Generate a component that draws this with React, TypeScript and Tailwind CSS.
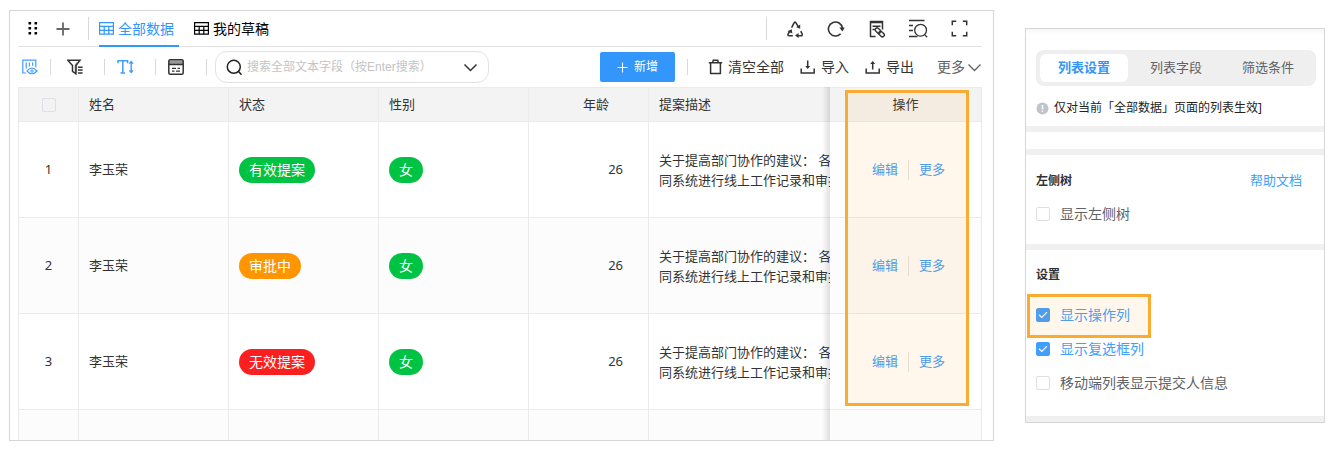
import { useState, type ReactNode } from "react";
import clsx from "clsx";

const rows = [
  { id: 1, name: "李玉荣", status: "有效提案", tone: "bg-[#00c343]", gender: "女", age: 26 },
  { id: 2, name: "李玉荣", status: "审批中", tone: "bg-[#ff9500]", gender: "女", age: 26 },
  { id: 3, name: "李玉荣", status: "无效提案", tone: "bg-[#fb1f1f]", gender: "女", age: 26 },
];

const description = ["关于提高部门协作的建议： 各", "同系统进行线上工作记录和审批"];

const cell = "border-r border-b border-[#ebebeb]";
const pinned =
  "relative before:absolute before:-left-2 before:-top-px before:bottom-0 before:w-2 before:bg-linear-to-r before:from-black/0 before:to-black/12";

function Icon({
  w,
  h,
  children,
  className,
}: {
  w: number;
  h: number;
  children: ReactNode;
  className?: string;
}) {
  return (
    <svg
      width={w}
      height={h}
      viewBox={`0 0 ${w} ${h}`}
      fill="none"
      stroke="currentColor"
      strokeWidth="1.4"
      className={clsx("shrink-0", className)}
      aria-hidden="true"
    >
      {children}
    </svg>
  );
}

function GridIcon() {
  return (
    <Icon w={15} h={13}>
      <path d="M.6.7h13.8v11.5H.6zM.6 4.4h13.8M.6 8.3h13.8M5.2 4.4v7.8M9.8 4.4v7.8" strokeWidth="1.2" />
    </Icon>
  );
}

function Divider({ tall }: { tall?: boolean }) {
  return <span className={clsx("w-px shrink-0 bg-[#d9d9d9]", tall ? "h-[23px]" : "h-4")} />;
}

function Check({
  id,
  label,
  checked,
  onChange,
}: {
  id: string;
  label: string;
  checked: boolean;
  onChange: () => void;
}) {
  return (
    <label
      htmlFor={id}
      className={clsx("flex h-[34px] items-center gap-2.5 text-sm", checked ? "text-[#409eff]" : "text-[#606266]")}
    >
      <span className="grid place-items-center">
        <input
          id={id}
          type="checkbox"
          checked={checked}
          onChange={onChange}
          className="col-start-1 row-start-1 size-3.5 appearance-none rounded-xs border border-[#dcdfe6] bg-white checked:border-[#409eff] checked:bg-[#409eff]"
        />
        {checked && (
          <Icon w={10} h={8} className="pointer-events-none col-start-1 row-start-1 text-white">
            <path d="M1 3.8l2.8 2.7L9 1.2" strokeWidth="1.2" />
          </Icon>
        )}
      </span>
      {label}
    </label>
  );
}

function TabBar() {
  return (
    <header className="mr-[11px] ml-2 flex h-9 items-center border-b border-[#e2e2e2] text-sm text-black">
      <button type="button" aria-label="拖动" className="ml-2.5">
        <Icon w={10} h={13}>
          <g fill="currentColor" stroke="none">
            {[0, 5, 10].map((y) => (
              <g key={y}>
                <rect x="0.5" y={y} width="2.6" height="2.6" rx=".6" />
                <rect x="6.5" y={y} width="2.6" height="2.6" rx=".6" />
              </g>
            ))}
          </g>
        </Icon>
      </button>
      <button type="button" aria-label="添加" className="ml-[18px] text-[#666]">
        <Icon w={14} h={14}>
          <path d="M7 .5v13M.5 7h13" strokeWidth="1.8" />
        </Icon>
      </button>
      <span className="ml-[18px] flex">
        <Divider tall />
      </span>
      <nav className="ml-2.5 flex h-9 gap-[15px]">
        <button type="button" className="flex h-9 items-center gap-1 border-b-2 border-[#3296fa] pt-0.5 pr-[5px] text-[#3296fa]">
          <GridIcon />
          全部数据
        </button>
        <button type="button" className="flex h-9 items-center gap-1">
          <GridIcon />
          我的草稿
        </button>
      </nav>
      <div className="mr-3.5 ml-auto flex items-center gap-[23px] text-[#333]">
        <span className="-mr-1 flex">
          <Divider tall />
        </span>
        <button type="button" aria-label="回收站">
          <Icon w={18} h={18}>
            <path d="M5.6 7.6L8.2 2.6q.8-1.2 1.6 0l2.6 4.2M3.9 11l-1.8 3.2q-.6 1.6 1 1.6h3.7M14.8 11.2l1.3 2.8q.5 1.8-1 1.8h-3.6" strokeWidth="1.6" />
            <path d="M14.2 4.4v4.4l-4-1.6zM1.5 11.2l4.2-2 .7 4.2zM12.6 13v5l-3.6-2.5z" fill="currentColor" stroke="none" />
          </Icon>
        </button>
        <button type="button" aria-label="刷新">
          <Icon w={18} h={18}>
            <path d="M13.6 13.7A7 7 0 1 1 15.4 8.2" strokeWidth="1.6" />
            <path d="M12.4 7.6h5.4l-2.4 3.8z" fill="currentColor" stroke="none" />
          </Icon>
        </button>
        <button type="button" aria-label="链接记录">
          <Icon w={18} h={18}>
            <path d="M7.5 16.5H2.5v-15h12v8M2.5 2.6h12M4.5 6.3h8M4.5 9.4h2.6" strokeWidth="1.5" />
            <rect x="8" y="7.5" width="3.8" height="6.2" rx="1.9" transform="rotate(-45 9.9 10.6)" />
            <rect x="11.6" y="11" width="3.8" height="6.2" rx="1.9" transform="rotate(-45 13.5 14.1)" />
          </Icon>
        </button>
        <button type="button" aria-label="列表搜索">
          <Icon w={19} h={19}>
            <path d="M0 1.5h15.5M0 6.5h4M0 11.5h4M0 17.5h8.5M15.6 15.6l2.5 2.6" strokeWidth="1.3" />
            <circle cx="11.6" cy="11.2" r="5.9" strokeWidth="1.3" />
          </Icon>
        </button>
        <button type="button" aria-label="全屏">
          <Icon w={17} h={17}>
            <path d="M5.2 1.3H1.3v3.9M11.8 1.3h3.9v3.9M5.2 15.7H1.3v-3.9M11.8 15.7h3.9v-3.9" strokeWidth="1.5" />
          </Icon>
        </button>
      </div>
    </header>
  );
}

function Toolbar() {
  return (
    <div className="mr-[11px] ml-2 flex h-10 items-center text-[#333]">
      <div className="flex items-center gap-3">
        <button type="button" aria-label="显示字段" className="ml-1 text-[#409eff]">
          <Icon w={16} h={16}>
            <path d="M4 14H.8V1.2h13v7M4.2 3.5v6M7.4 3.5v4M10.6 3.5v3.3" strokeWidth="1.2" />
            <path d="M5 12q4.8-6 10 0-5.200 5.500-10 0z" strokeWidth="1.2" />
            <circle cx="10" cy="12" r="1.2" strokeWidth="1" />
          </Icon>
        </button>
        <Divider />
        <button type="button" aria-label="筛选" className="ml-1">
          <Icon w={17} h={16}>
            <path d="M7.6 6l2.600-3.500v12l-2.600-2z" fill="#aaa" stroke="none" />
            <path d="M.8 1.3h12.200L8.900 6.500v8.300L5.500 12.300V6.500zM11 8.300h4.600M11 11.100h4.600M11 13.900h4.600" strokeWidth="1.500" />
          </Icon>
        </button>
        <span className="ml-2 flex">
          <Divider />
        </span>
        <button type="button" aria-label="行高">
          <Icon w={17} h={16} className="text-[#409eff]">
            <path d="M1 4.200V1.700h9.600v2.500M5.800 1.700v12M3.500 13.900h4.600" strokeWidth="1.500" />
            <path d="M14.200 3v10M12.300 4.600l1.900-2.100 1.900 2.100M12.300 11.400l1.900 2.100 1.900-2.100" strokeWidth="1.400" />
          </Icon>
        </button>
        <span className="ml-[9px] flex">
          <Divider />
        </span>
        <button type="button" aria-label="视图">
          <Icon w={16} h={16}>
            <path d="M1 1.500h14v4H1z" fill="#999" stroke="none" />
            <rect x=".8" y=".8" width="14.400" height="14.400" rx="1.500" strokeWidth="1.500" />
            <path d="M1 5.500h14M4 9.300h4M9.500 9.300h2.500M4 12.200h2.500M8 12.200h4" strokeWidth="1.300" />
          </Icon>
        </button>
        <span className="ml-2.5 flex">
          <Divider />
        </span>
      </div>
      <div className="ml-2 flex h-8 w-[274px] items-center rounded-xl border border-[#e2e2e2] px-2.5">
        <Icon w={17} h={17} className="text-[#222]">
          <circle cx="7.800" cy="7.800" r="6.500" strokeWidth="1.500" />
          <path d="M12.500 12.500l3 3.200" strokeWidth="1.500" />
        </Icon>
        <input
          type="text"
          aria-label="搜索"
          placeholder="搜索全部文本字段（按Enter搜索）"
          className="ml-1 min-w-0 flex-1 font-['Liberation_Sans','Noto_Sans_CJK_SC',sans-serif] text-xs outline-none placeholder:text-[#c4c4c4]"
        />
        <button type="button" aria-label="展开搜索">
          <Icon w={15} h={9}>
            <path d="M1.500 1.500l6 6 6-6" strokeWidth="1.500" />
          </Icon>
        </button>
      </div>
      <div className="ml-auto flex items-center text-sm">
        <button
          type="button"
          className="flex h-[30px] w-[75px] items-center justify-center gap-1.5 rounded-xs bg-[#3296fa] text-xs text-white"
        >
          <Icon w={11} h={11}>
            <path d="M5.500.5v10M.5 5.500h10" strokeWidth="1.100" />
          </Icon>
          新增
        </button>
        <span className="ml-3 flex">
          <Divider />
        </span>
        <button type="button" className="ml-5 flex items-center gap-[5px]">
          <Icon w={15} h={16}>
            <path d="M.8 3.800h13.400M4.700 3.500l.6-2.300h4.400l.6 2.300M2.600 4v10.500h9.800V4" strokeWidth="1.500" />
          </Icon>
          清空全部
        </button>
        <button type="button" className="ml-4 flex items-center gap-[5px]">
          <Icon w={16} h={15}>
            <path d="M1.200 8.500V13h13V8.500M7.700.5v7" strokeWidth="1.500" />
            <path d="M5.200 6h5l-2.500 3z" fill="currentColor" stroke="none" />
          </Icon>
          导入
        </button>
        <button type="button" className="ml-4 flex items-center gap-[5px]">
          <Icon w={16} h={15}>
            <path d="M1.200 8.500V13h13V8.500M7.700 2.500v7" strokeWidth="1.500" />
            <path d="M5.200 4h5L7.700 1z" fill="currentColor" stroke="none" />
          </Icon>
          导出
        </button>
        <button type="button" className="ml-[23px] flex items-center gap-0.5 text-[#606266]">
          更多
          <Icon w={15} h={9}>
            <path d="M1.500 1.500l6 6 6-6" strokeWidth="1.300" />
          </Icon>
        </button>
      </div>
    </div>
  );
}

function DataTable() {
  return (
    <div className="relative mr-[11px] ml-2 border-t border-l border-[#ebebeb]">
      <table className="w-full table-fixed border-separate border-spacing-0 text-[13px] text-[#333]">
        <colgroup>
          <col className="w-[60px]" />
          <col className="w-[150px]" />
          <col className="w-[150px]" />
          <col className="w-[150px]" />
          <col className="w-[120px]" />
          <col />
          <col className="w-[152px]" />
        </colgroup>
        <thead className="bg-[#f3f3f3] text-left [&_th]:h-[34px] [&_th]:font-normal">
          <tr>
            <th className={cell}>
              <input
                type="checkbox"
                aria-label="全选"
                className="mx-auto block size-3.5 appearance-none rounded-xs border border-[#dcdfe6]"
              />
            </th>
            <th className={clsx(cell, "px-2.5")}>姓名</th>
            <th className={clsx(cell, "px-2.5")}>状态</th>
            <th className={clsx(cell, "px-2.5")}>性别</th>
            <th className={clsx(cell, "pr-[39px] text-right")}>年龄</th>
            <th className="border-b border-[#ebebeb] px-2.5">提案描述</th>
            <th className={clsx(cell, pinned, "text-center")}>操作</th>
          </tr>
        </thead>
        <tbody>
          {rows.map((row) => (
            <tr key={row.id} className="h-24 even:bg-[#fcfcfc]">
              <td className={clsx(cell, "text-center")}>{row.id}</td>
              <td className={clsx(cell, "px-2.5")}>{row.name}</td>
              <td className={clsx(cell, "px-2.5")}>
                <span className={clsx("inline-block h-[26px] rounded-full px-2.5 text-sm/[26px] text-white", row.tone)}>
                  {row.status}
                </span>
              </td>
              <td className={clsx(cell, "px-2.5")}>
                <span className="inline-block h-[26px] rounded-full bg-[#00c343] px-2.5 text-sm/[26px] text-white">
                  {row.gender}
                </span>
              </td>
              <td className={clsx(cell, "pr-[25px] text-right")}>{row.age}</td>
              <td className="overflow-hidden border-b border-[#ebebeb] pl-2.5 leading-5 whitespace-nowrap">
                {description.map((line) => (
                  <p key={line}>{line}</p>
                ))}
              </td>
              <td className={clsx(cell, pinned, "pl-1.5")}>
                <div className="flex items-center justify-center gap-2.5 text-[#409eff]">
                  <button type="button">编辑</button>
                  <span className="h-5 w-px bg-[#e2e2e2]" />
                  <button type="button">更多</button>
                </div>
              </td>
            </tr>
          ))}
          <tr className="h-[30px] bg-[#fcfcfc]">
            <td className="border-r border-[#ebebeb]" />
            <td className="border-r border-[#ebebeb]" />
            <td className="border-r border-[#ebebeb]" />
            <td className="border-r border-[#ebebeb]" />
            <td className="border-r border-[#ebebeb]" />
            <td />
            <td className={clsx("border-r border-[#ebebeb]", pinned)} />
          </tr>
        </tbody>
      </table>
      {/* Highlight over the action column */}
      <div className="pointer-events-none absolute top-0.5 right-[13px] bottom-[34px] w-[124px] border-3 border-[#f9ac2f] bg-[#ff9800]/8" />
    </div>
  );
}

function SettingsPanel() {
  const [tab, setTab] = useState("列表设置");
  const [options, setOptions] = useState({ tree: false, actions: true, checks: true, mobile: false });
  const toggle = (key: keyof typeof options) => setOptions({ ...options, [key]: !options[key] });

  return (
    <aside className="mt-[18px] w-[300px] shrink-0 border border-[#d6d6d6] bg-white">
      <div className="bg-linear-to-b from-[#f7f7f7] to-white to-[6px] px-2.5 pt-[21px]">
        <div className="-mr-0.5 grid h-9 grid-cols-[88px_1fr_1fr] gap-1 rounded-lg bg-[#efefef] p-1 text-[13px]">
          {["列表设置", "列表字段", "筛选条件"].map((name) => (
            <button
              key={name}
              type="button"
              onClick={() => setTab(name)}
              className={clsx(
                "rounded-md whitespace-nowrap",
                tab === name ? "bg-white font-bold text-[#3296fa]" : "text-[#606266]",
              )}
            >
              {name}
            </button>
          ))}
        </div>
        <p className="flex h-10 items-center gap-[5px] pt-1 text-xs text-[#222]">
          <Icon w={13} h={13} className="text-[#c0c4cc]">
            <circle cx="6.500" cy="6.500" r="6" fill="currentColor" stroke="none" />
            <path d="M6.500 3v4.200M6.500 8.500v1.500" stroke="#fff" strokeWidth="1.500" />
          </Icon>
          仅对当前「全部数据」页面的列表生效]
        </p>
      </div>
      <div className="h-[23px] border-t-6 border-[#f0f0f0]" />
      <section className="border-t-6 border-[#f0f0f0] px-2.5 pt-3.5 pb-[13px]">
        <div className="mb-1 flex h-6 items-center justify-between pr-3">
          <h2 className="text-xs font-bold text-[#303133]">左侧树</h2>
          <a href="#help" className="text-[13px] text-[#409eff]">
            帮助文档
          </a>
        </div>
        <Check id="tree" label="显示左侧树" checked={options.tree} onChange={() => toggle("tree")} />
      </section>
      <section className="border-y-6 border-[#f0f0f0] px-2.5 pt-3 pb-4">
        <h2 className="flex h-[26px] items-center text-xs font-bold text-[#303133]">设置</h2>
        <div className="relative mt-2.5">
          <Check id="actions" label="显示操作列" checked={options.actions} onChange={() => toggle("actions")} />
          <div className="pointer-events-none absolute -top-1 -left-[9px] h-11 w-[124px] border-3 border-[#f9ac2f] bg-[#ff9800]/8" />
        </div>
        <Check id="checks" label="显示复选框列" checked={options.checks} onChange={() => toggle("checks")} />
        <Check
          id="mobile"
          label="移动端列表显示提交人信息"
          checked={options.mobile}
          onChange={() => toggle("mobile")}
        />
      </section>
    </aside>
  );
}

export default function App() {
  return (
    <div className="flex items-start gap-[31px] bg-white pt-2.5 pr-3 pb-2.5 pl-[9px] font-['Noto_Sans','Noto_Sans_CJK_SC',sans-serif]">
      <main className="min-w-0 flex-1 border border-[#d6d6d6]">
        <TabBar />
        <Toolbar />
        <DataTable />
      </main>
      <SettingsPanel />
    </div>
  );
}
